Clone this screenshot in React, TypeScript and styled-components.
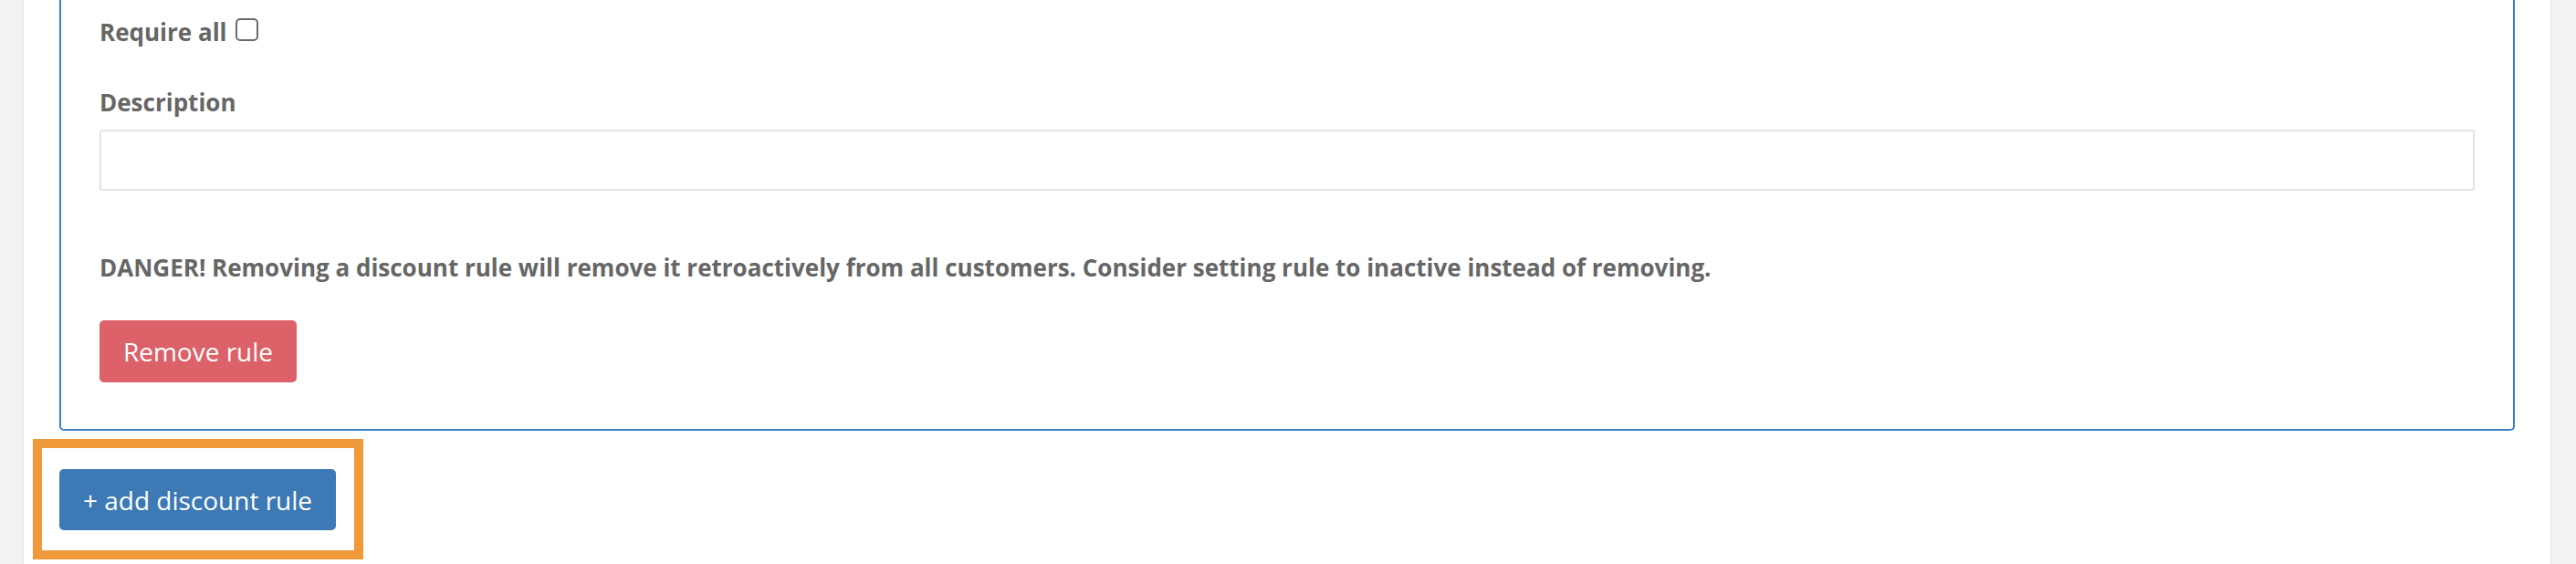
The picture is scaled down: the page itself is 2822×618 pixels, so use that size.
import React from "react";
import styled, { createGlobalStyle } from "styled-components";

const GlobalStyle = createGlobalStyle`
  html, body {
    margin: 0;
    padding: 0;
    background: #f2f2f2;
    font-family: "Open Sans", "Liberation Sans", sans-serif;
    color: #666666;
  }
  * { box-sizing: border-box; }
`;

const Page = styled.div`
  display: flex;
  width: 2822px;
  height: 618px;
  overflow: hidden;
  background: #f2f2f2;
`;

const Gutter = styled.div<{ $w: number }>`
  flex: 0 0 ${(p) => p.$w}px;
  background: #f2f2f2;
`;

const Main = styled.main`
  flex: 1;
  background: #fff;
  border-left: 1px solid #e6e6e8;
  border-right: 1px solid #e6e6e8;
  padding: 0 39px;
  display: flex;
  flex-direction: column;
  align-items: flex-start;
`;

const Panel = styled.section`
  align-self: stretch;
  border: 2px solid #3d7ec2;
  border-top: none;
  border-radius: 0 0 5px 5px;
  padding: 17px 42px 51px 42px;
  display: flex;
  flex-direction: column;
`;

const Label = styled.label`
  display: flex;
  align-items: center;
  gap: 9px;
  font-size: 26px;
  line-height: 37px;
  font-weight: 700;
  color: #666666;
  margin-bottom: 11px;
`;

const Check = styled.input`
  appearance: none;
  margin: 0;
  width: 25px;
  height: 25px;
  border: 2px solid #6a6a6a;
  border-radius: 5px;
  background: #fff;
  transform: translateY(-3px);
`;

const FieldGroup = styled.div<{ $mt: number }>`
  margin-top: ${(p) => p.$mt}px;
  display: flex;
  flex-direction: column;
`;

const TextInput = styled.input`
  height: 67px;
  width: 100%;
  border: 2px solid #e4e4e4;
  border-radius: 2px;
  padding: 0 20px;
  font-family: inherit;
  font-size: 26px;
  background: #fff;
  outline: none;
`;

const Warning = styled.p`
  margin: 66px 0 0 0;
  font-size: 26px;
  line-height: 37px;
  font-weight: 700;
  color: #666666;
`;

const Button = styled.button<{ $variant: "danger" | "primary" }>`
  font-family: inherit;
  font-size: 28px;
  font-weight: 400;
  color: #fff;
  border: none;
  border-radius: 5px;
  cursor: pointer;
  background: ${(p) => (p.$variant === "danger" ? "#dc6169" : "#3c79b5")};
  display: inline-flex;
  align-items: center;
  justify-content: center;
`;

const RemoveButton = styled(Button)`
  margin-top: 39px;
  width: 216px;
  height: 68px;
  align-self: flex-start;
`;

const AddButton = styled(Button)`
  width: 303px;
  height: 67px;
`;

const Highlight = styled.div`
  margin-top: 9px;
  margin-left: -29px;
  border: 10px solid #f0993a;
  padding: 23px 20px 22px 19px;
  display: flex;
`;

export default function App() {
  return (
    <>
      <GlobalStyle />
      <Page>
        <Gutter $w={25} />
        <Main>
          <Panel>
            <Label>
              Require all <Check type="checkbox" />
            </Label>
            <FieldGroup $mt={29}>
              <Label>Description</Label>
              <TextInput type="text" />
            </FieldGroup>
            <Warning>
              DANGER! Removing a discount rule will remove it retroactively from all customers. Consider setting rule to inactive instead of removing.
            </Warning>
            <RemoveButton $variant="danger">Remove rule</RemoveButton>
          </Panel>
          <Highlight>
            <AddButton $variant="primary">+ add discount rule</AddButton>
          </Highlight>
        </Main>
        <Gutter $w={27} />
      </Page>
    </>
  );
}
